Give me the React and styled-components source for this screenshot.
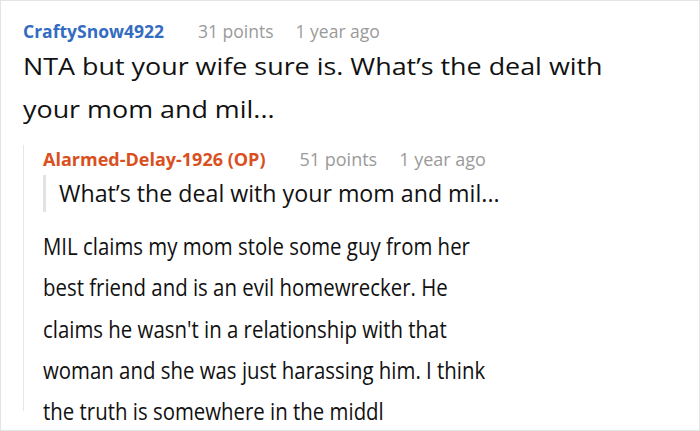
import React from "react";
import styled, { createGlobalStyle } from "styled-components";

const GlobalStyle = createGlobalStyle`
  html, body {
    margin: 0;
    padding: 0;
    background: #ffffff;
  }
  * {
    box-sizing: border-box;
  }
`;

const Frame = styled.div`
  width: 700px;
  height: 431px;
  border: 1px solid #e4e4e4;
  overflow: hidden;
  padding: 18px 0 0 22px;
  font-family: "Open Sans", "Noto Sans", sans-serif;
  color: #111111;
`;

const Meta = styled.div`
  display: flex;
  align-items: baseline;
  gap: 22px;
  font-size: ${({ $size }) => $size || 17.5}px;
  line-height: 24px;
`;

const Author = styled.span`
  font-weight: 700;
  color: ${({ $op }) => ($op ? "#d9501e" : "#336cc1")};
  margin-right: 12px;
`;

const Muted = styled.span`
  color: #9a9a9a;
`;

// the screenshot shows this text stretched / squeezed sideways, so the
// lines are set by hand and scaled on x
const Lines = styled.p`
  margin: ${({ $top }) => $top}px 0 0;
  font-size: 24px;
  line-height: ${({ $lh }) => $lh}px;
  white-space: nowrap;
  transform: scaleX(${({ $sx }) => $sx});
  transform-origin: left top;
`;

const Reply = styled.div`
  margin-top: 15px;
  padding: 2px 0 0 19px;
  border-left: 1px solid #e6e6e6;
  height: 266px;
`;

const Quote = styled.blockquote`
  margin: 4px 0 0;
  padding: 0 0 0 13px;
  border-left: 3px solid #e2e2e2;
  font-size: 23.2px;
  line-height: 37px;
`;

function TextBlock({ lines, ...rest }) {
  return (
    <Lines {...rest}>
      {lines.map((l, i) => (
        <React.Fragment key={i}>
          {l}
          {i < lines.length - 1 && <br />}
        </React.Fragment>
      ))}
    </Lines>
  );
}

const comment = ["NTA but your wife sure is. What’s the deal with", "your mom and mil..."];

const reply = [
  "MIL claims my mom stole some guy from her",
  "best friend and is an evil homewrecker. He",
  "claims he wasn't in a relationship with that",
  "woman and she was just harassing him. I think",
  "the truth is somewhere in the middl",
];

export default function App() {
  return (
    <>
      <GlobalStyle />
      <Frame>
        <Meta>
          <Author>CraftySnow4922</Author>
          <Muted>31 points</Muted>
          <Muted>1 year ago</Muted>
        </Meta>
        <TextBlock lines={comment} $top={1} $lh={43} $sx={1.12} />
        <Reply>
          <Meta $size={18}>
            <Author $op>Alarmed-Delay-1926 (OP)</Author>
            <Muted>51 points</Muted>
            <Muted>1 year ago</Muted>
          </Meta>
          <Quote>What’s the deal with your mom and mil...</Quote>
          <TextBlock lines={reply} $top={13} $lh={41.3} $sx={0.85} />
        </Reply>
      </Frame>
    </>
  );
}
